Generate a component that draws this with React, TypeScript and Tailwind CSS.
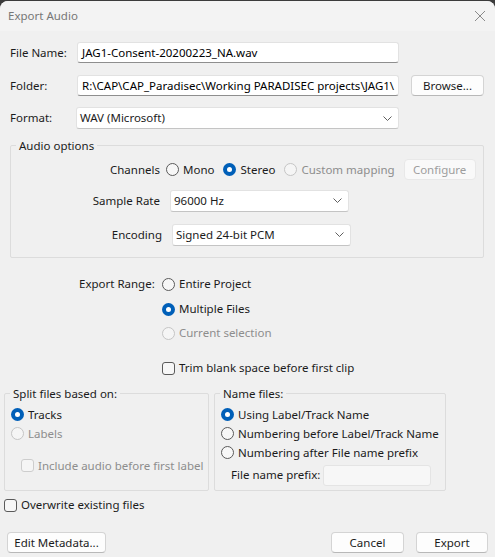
import React from 'react';

const font = { fontFamily: '"Noto Sans", "Segoe UI", Arial, sans-serif' };

function Radio({ checked = false, disabled = false }: { checked?: boolean; disabled?: boolean }) {
  if (checked) {
    return (
      <span className="w-[13px] h-[13px] rounded-full bg-[#005fb8] flex items-center justify-center shrink-0">
        <span className="w-[5px] h-[5px] rounded-full bg-white" />
      </span>
    );
  }
  return (
    <span
      className={`w-[13px] h-[13px] rounded-full border shrink-0 ${
        disabled ? 'border-[#c5c5c5] bg-[#f5f5f5]' : 'border-[#5a5a5a] bg-[#f7f7f7]'
      }`}
    />
  );
}

function Check({ disabled = false }: { disabled?: boolean }) {
  return (
    <span
      className={`w-[13px] h-[13px] rounded-[3px] border shrink-0 ${
        disabled ? 'border-[#cdcdcd] bg-[#f5f5f5]' : 'border-[#5a5a5a] bg-[#f7f7f7]'
      }`}
    />
  );
}

function Option({
  checked,
  disabled,
  check,
  children,
}: {
  checked?: boolean;
  disabled?: boolean;
  check?: boolean;
  children: React.ReactNode;
}) {
  return (
    <div className="flex items-center gap-[4px] whitespace-nowrap">
      {check ? <Check disabled={disabled} /> : <Radio checked={checked} disabled={disabled} />}
      <span className={disabled ? 'text-[#8d8d8d]' : 'text-[#1b1b1b]'}>{children}</span>
    </div>
  );
}

function Chevron() {
  return (
    <svg width="9" height="5" viewBox="0 0 9 5" className="shrink-0">
      <path d="M0.5 0.5 L4.5 4.5 L8.5 0.5" fill="none" stroke="#5f5f5f" strokeWidth="1" />
    </svg>
  );
}

function Combo({ value, width }: { value: string; width: string }) {
  return (
    <div
      className={`${width} h-[22px] bg-white border border-[#e2e2e2] border-b-[#c4c4c4] rounded-[3px] flex items-center justify-between pl-[3px] pr-[6px]`}
    >
      <span className="text-[#1b1b1b] whitespace-nowrap">{value}</span>
      <Chevron />
    </div>
  );
}

function Button({ children, width, disabled }: { children: React.ReactNode; width: string; disabled?: boolean }) {
  return (
    <div
      className={`${width} h-[21px] rounded-[4px] border flex items-center justify-center whitespace-nowrap ${
        disabled
          ? 'bg-[#f9f9f9] border-[#e8e8e8] text-[#9d9d9d]'
          : 'bg-[#fdfdfd] border-[#d4d4d4] border-b-[#b8b8b8] text-[#1b1b1b]'
      }`}
    >
      {children}
    </div>
  );
}

export default function App() {
  return (
    <div className="w-[495px] h-[557px] bg-[#3b3b3b] overflow-hidden text-[11.5px] leading-none" style={font}>
      <div className="mt-[1px] h-[556px] bg-[#f0f0f0] rounded-t-[8px] flex flex-col">
        {/* Title bar */}
        <div className="h-[30px] bg-[#f3f3f3] rounded-t-[8px] flex items-center justify-between pl-[8px] pr-[9px]">
          <span className="text-[#777777]">Export Audio</span>
          <svg width="12" height="12" viewBox="0 0 12 12">
            <path d="M1 1 L11 11 M11 1 L1 11" stroke="#8a8a8a" strokeWidth="1" />
          </svg>
        </div>

        {/* File name */}
        <div className="flex items-center mt-[11px] pl-[10px] h-[21px]">
          <span className="w-[67px] text-[#1b1b1b] whitespace-nowrap">File Name:</span>
          <div className="w-[322px] h-[21px] bg-white border border-[#e2e2e2] border-b-[#8e8e8e] rounded-[3px] flex items-center pl-[4px]">
            JAG1-Consent-20200223_NA.wav
          </div>
        </div>

        {/* Folder */}
        <div className="flex items-center mt-[12px] pl-[10px] h-[21px]">
          <span className="w-[67px] text-[#1b1b1b]">Folder:</span>
          <div className="w-[322px] h-[21px] bg-white border border-[#e2e2e2] border-b-[#8e8e8e] rounded-[3px] flex items-center pl-[4px] overflow-hidden whitespace-nowrap">
            R:\CAP\CAP_Paradisec\Working PARADISEC projects\JAG1\
          </div>
          <div className="ml-[12px]">
            <Button width="w-[73px]">Browse...</Button>
          </div>
        </div>

        {/* Format */}
        <div className="flex items-center mt-[11px] pl-[10px] h-[22px]">
          <span className="w-[66px] text-[#1b1b1b]">Format:</span>
          <Combo value="WAV (Microsoft)" width="w-[323px]" />
        </div>

        {/* Audio options */}
        <fieldset className="mt-[11px] ml-[10px] w-[474px] h-[118px] border border-[#dcdcdc] rounded-[2px] px-0">
          <legend className="ml-[5px] px-[3px] text-[#1b1b1b]">Audio options</legend>
          <div className="flex items-center h-[20px] mt-[8px]">
            <span className="w-[149px] text-right text-[#1b1b1b]">Channels</span>
            <div className="ml-[6px] flex items-center gap-[9px]">
              <Option>Mono</Option>
              <Option checked>Stereo</Option>
              <Option disabled>Custom mapping</Option>
            </div>
            <div className="ml-[9px]">
              <Button width="w-[72px]" disabled>
                Configure
              </Button>
            </div>
          </div>
          <div className="flex items-center h-[22px] mt-[10px]">
            <span className="w-[149px] text-right text-[#1b1b1b] whitespace-nowrap">Sample Rate</span>
            <div className="ml-[10px]">
              <Combo value="96000 Hz" width="w-[179px]" />
            </div>
          </div>
          <div className="flex items-center h-[22px] mt-[12px]">
            <span className="w-[151px] text-right text-[#1b1b1b]">Encoding</span>
            <div className="ml-[10px]">
              <Combo value="Signed 24-bit PCM" width="w-[179px]" />
            </div>
          </div>
        </fieldset>

        {/* Export range */}
        <div className="flex mt-[18px] pl-[79px]">
          <span className="w-[83px] h-[16px] flex items-center text-[#1b1b1b] whitespace-nowrap">Export Range:</span>
          <div className="flex flex-col">
            <div className="h-[16px] flex items-center">
              <Option>Entire Project</Option>
            </div>
            <div className="h-[16px] flex items-center mt-[9px]">
              <Option checked>Multiple Files</Option>
            </div>
            <div className="h-[16px] flex items-center mt-[8px]">
              <Option disabled>Current selection</Option>
            </div>
            <div className="h-[16px] flex items-center mt-[19px]">
              <Option check>Trim blank space before first clip</Option>
            </div>
          </div>
        </div>

        {/* Split / Name files */}
        <div className="flex mt-[12px] pl-[4px] gap-[5px]">
          <fieldset className="w-[205px] h-[103px] border border-[#dcdcdc] rounded-[2px] px-0">
            <legend className="ml-[5px] px-[3px] text-[#1b1b1b] whitespace-nowrap">Split files based on:</legend>
            <div className="pl-[6px] flex flex-col">
              <div className="h-[16px] flex items-center mt-[7px]">
                <Option checked>Tracks</Option>
              </div>
              <div className="h-[16px] flex items-center mt-[3px]">
                <Option disabled>Labels</Option>
              </div>
              <div className="h-[16px] flex items-center mt-[16px] pl-[10px]">
                <Option check disabled>
                  Include audio before first label
                </Option>
              </div>
            </div>
          </fieldset>
          <fieldset className="w-[232px] h-[103px] border border-[#dcdcdc] rounded-[2px] px-0">
            <legend className="ml-[5px] px-[3px] text-[#1b1b1b]">Name files:</legend>
            <div className="pl-[6px] flex flex-col">
              <div className="h-[16px] flex items-center mt-[7px]">
                <Option checked>Using Label/Track Name</Option>
              </div>
              <div className="h-[16px] flex items-center mt-[3px]">
                <Option>Numbering before Label/Track Name</Option>
              </div>
              <div className="h-[16px] flex items-center mt-[3px]">
                <Option>Numbering after File name prefix</Option>
              </div>
              <div className="flex items-center mt-[4px] pl-[10px]">
                <span className="w-[92px] text-[#1b1b1b] whitespace-nowrap">File name prefix:</span>
                <div className="w-[108px] h-[21px] bg-[#f7f7f7] border border-[#e4e4e4] rounded-[3px]" />
              </div>
            </div>
          </fieldset>
        </div>

        {/* Overwrite */}
        <div className="h-[16px] flex items-center mt-[6px] pl-[4px]">
          <Option check>Overwrite existing files</Option>
        </div>

        {/* Buttons */}
        <div className="flex items-center mt-[19px] pl-[7px] pr-[7px]">
          <Button width="w-[99px]">Edit Metadata...</Button>
          <div className="ml-auto flex gap-[12px]">
            <Button width="w-[73px]">Cancel</Button>
            <Button width="w-[72px]">Export</Button>
          </div>
        </div>
      </div>
    </div>
  );
}
